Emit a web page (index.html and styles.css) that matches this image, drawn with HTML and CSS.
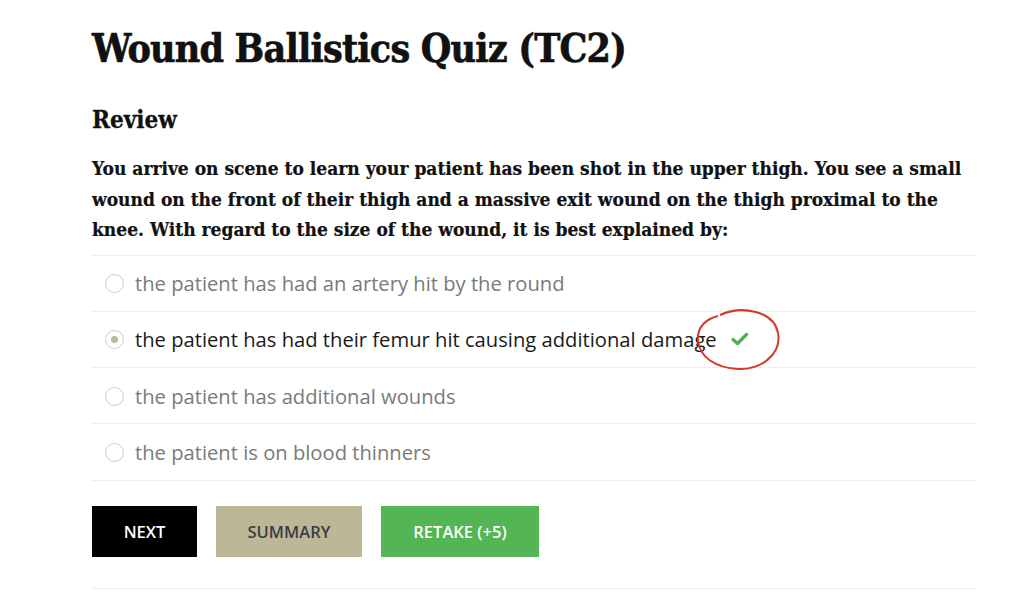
FILE: index.html
```html
<!DOCTYPE html>
<html>
<head>
<meta charset="utf-8">
<link rel="stylesheet" href="styles.css">
</head>
<body>
<main class="quiz">
  <h1 class="title">Wound Ballistics Quiz (TC2)</h1>
  <h2 class="review">Review</h2>
  <p class="question">You arrive on scene to learn your patient has been shot in the upper thigh. You see a small wound on the front of their thigh and a massive exit wound on the thigh proximal to the knee. With regard to the size of the wound, it is best explained by:</p>
  <ul class="options">
    <li class="option"><span class="radio"></span><span class="label">the patient has had an artery hit by the round</span></li>
    <li class="option selected"><span class="radio"><span class="dot"></span></span><span class="label">the patient has had their femur hit causing additional damage</span>
      <span class="check-wrap">
        <svg class="check" width="18" height="14" viewBox="0 0 18 14"><path d="M2 7.5 L6.5 11.5 L15.5 2.5" fill="none" stroke="#4caf50" stroke-width="3.2" stroke-linecap="round" stroke-linejoin="round"/></svg>
        <svg class="circle" width="90" height="66" viewBox="0 0 90 66"><path d="M26 8 C48 -2 80 4 84 26 C88 48 66 63 44 62 C22 61 5 50 4 33 C3 20 12 12 24 9" fill="none" stroke="#d23a2a" stroke-width="2"/></svg>
      </span>
    </li>
    <li class="option"><span class="radio"></span><span class="label">the patient has additional wounds</span></li>
    <li class="option"><span class="radio"></span><span class="label">the patient is on blood thinners</span></li>
  </ul>
  <div class="actions">
    <button class="btn btn-next">NEXT</button>
    <button class="btn btn-summary">SUMMARY</button>
    <button class="btn btn-retake">RETAKE (+5)</button>
  </div>
  <div class="bottom-rule"></div>
</main>
</body>
</html>
```
FILE: styles.css
```css
html, body {
  margin: 0;
  padding: 0;
  background: #fff;
}
.quiz {
  width: 884px;
  margin-left: 92px;
  padding-top: 22px;
}
.title {
  margin: 0;
  font-family: "DejaVu Serif", serif;
  font-stretch: condensed;
  font-weight: 700;
  font-size: 39px;
  line-height: 52px;
  color: #111;
  letter-spacing: -0.8px;
  -webkit-text-stroke: 0.6px #111;
}
.review {
  margin: 30px 0 0;
  font-family: "DejaVu Serif", serif;
  font-stretch: condensed;
  font-weight: 700;
  font-size: 24px;
  line-height: 32px;
  color: #111;
  -webkit-text-stroke: 0.3px #111;
}
.question {
  margin: 17px 0 0;
  font-family: "DejaVu Serif", serif;
  font-stretch: condensed;
  font-weight: 700;
  font-size: 19px;
  line-height: 30.5px;
  color: #111;
  -webkit-text-stroke: 0.2px #111;
}
.options {
  list-style: none;
  margin: 10px 0 0;
  padding: 0;
  border-top: 1px solid #eee;
}
.option {
  display: flex;
  align-items: center;
  height: 55.3px;
  border-bottom: 1px solid #eee;
  padding-left: 13px;
  font-family: "Open Sans", sans-serif;
  font-size: 20.2px;
  color: #7a7a7a;
}
.option.selected {
  color: #1a1a1a;
}
.radio {
  width: 19px;
  height: 19px;
  border: 1px solid #cfcfcf;
  border-radius: 50%;
  box-sizing: border-box;
  margin-right: 11px;
  display: flex;
  align-items: center;
  justify-content: center;
  flex: none;
  margin-top: 1px;
}
.dot {
  width: 7px;
  height: 7px;
  border-radius: 50%;
  background: #bfb79a;
}
.check-wrap {
  position: relative;
  margin-left: 14px;
  width: 18px;
  height: 14px;
  display: inline-block;
}
.check {
  display: block;
}
.circle {
  position: absolute;
  left: -37px;
  top: -25px;
}
.actions {
  display: flex;
  gap: 19px;
  margin-top: 25px;
}
.btn {
  border: none;
  height: 51px;
  font-family: "Open Sans", sans-serif;
  font-weight: 600;
  font-size: 16.5px;
  padding: 0;
  cursor: pointer;
}
.btn-next {
  width: 105px;
  background: #000;
  color: #fff;
}
.btn-summary {
  width: 146px;
  background: #bcb796;
  color: #3c3c48;
}
.btn-retake {
  width: 158px;
  background: #53b553;
  color: #fff;
}
.bottom-rule {
  margin-top: 31px;
  border-top: 1px dotted #e4e4e4;
}
```
